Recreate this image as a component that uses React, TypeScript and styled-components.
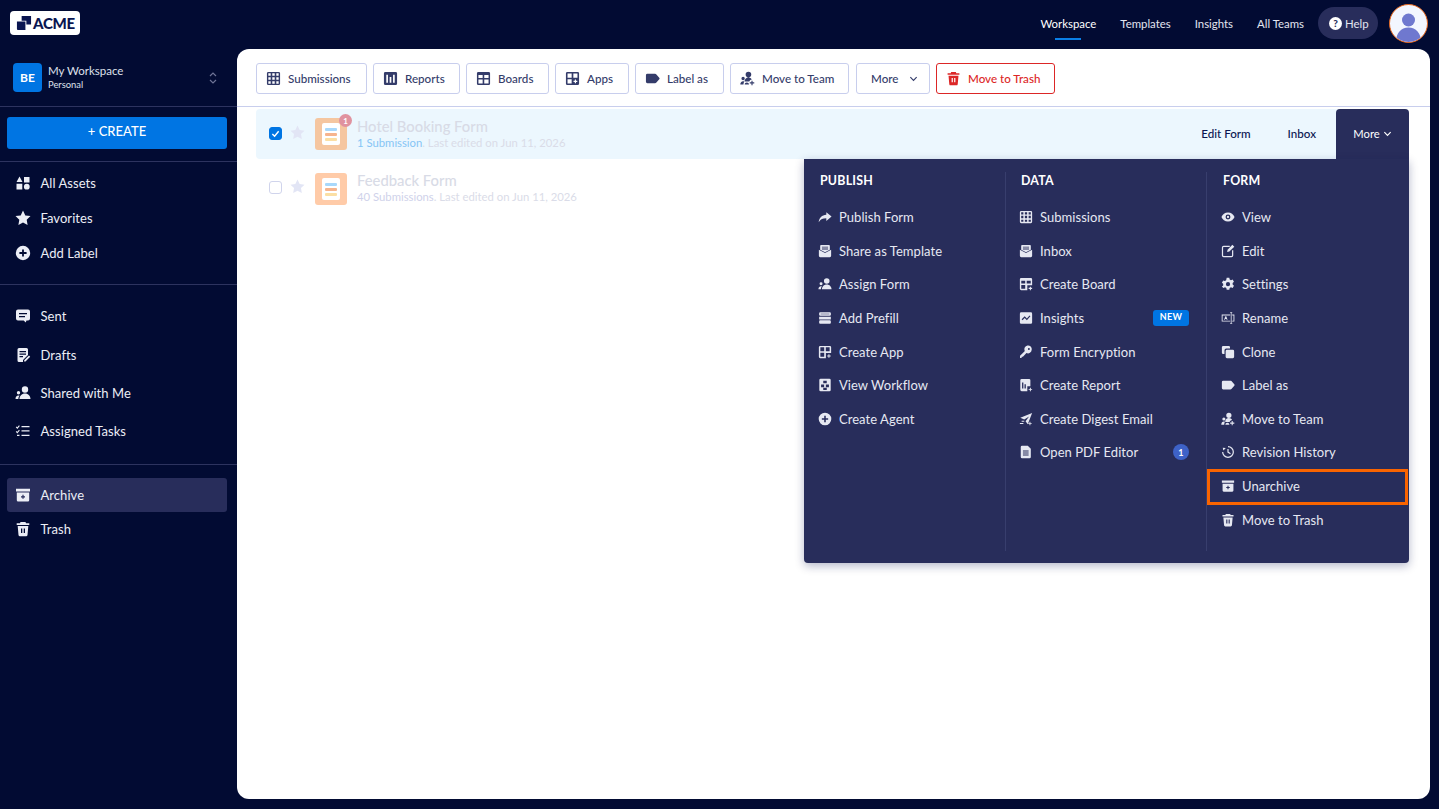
import React from 'react';
import styled, { createGlobalStyle } from 'styled-components';

const navy = '#020b33';
const panel = '#282d5b';
const FONT = `'Lato', 'Noto Sans', sans-serif`;

const GlobalStyle = createGlobalStyle`
    html, body { margin: 0; padding: 0; height: 100%; }
    body { background: ${navy}; font-family: ${FONT}; overflow: hidden; }
    #root { height: 100%; }
    * { box-sizing: border-box; }
`;

const r = (x: number, y: number, w: number, h: number) => `M${x} ${y}h${w}v${h}h${-w}z`;
const P = ({ d }: { d: string }) => <path fillRule="evenodd" clipRule="evenodd" d={d} />;
const plus = (x: number, y: number, s = 1.1, a = 2) =>
    `M${x - s / 2} ${y - a}h${s}v${a - s / 2}h${a - s / 2}v${s}h${s / 2 - a}v${a - s / 2}h${-s}v${s / 2 - a}h${s / 2 - a}v${-s}h${a - s / 2}z`;
const circle = (cx: number, cy: number, c: number) =>
    `M${cx - c} ${cy}a${c} ${c} 0 1 0 ${c * 2} 0a${c} ${c} 0 1 0 ${-c * 2} 0z`;

const icons: Record<string, React.ReactNode> = {
    assets: <P d={`M4.5 1.5L7.5 7H1.5z${r(9, 2, 5.5, 5.5)}${r(1.5, 8.8, 5.8, 5.7)}${circle(11.8, 11.7, 2.9)}`} />,
    star: <path d="M8 .6l2.3 4.8 5.200.7-3.800 3.600.9 5.200L8 12.400l-4.600 2.500.9-5.200L.5 6.100l5.200-.7z" />,
    plusCircle: <P d={`${circle(8, 8, 7.2)}${plus(8, 8, 1.8, 3.6)}`} />,
    sent: <P d={`M3 1.500h10a2 2 0 0 1 2 2v7a2 2 0 0 1-2 2h-1.500l-.8 2-2-2H3a2 2 0 0 1-2-2v-7a2 2 0 0 1 2-2z${r(4, 5, 8, 1.300)}${r(4, 8, 6, 1.300)}`} />,
    drafts: <P d={`M4 1h7.500A1.500 1.500 0 0 1 13 2.500V8l-5 5v2H4a1.500 1.500 0 0 1-1.500-1.500v-11A1.500 1.500 0 0 1 4 1z${r(4.500, 4, 6.500, 1.200)}${r(4.500, 6.500, 6.500, 1.200)}${r(4.500, 9, 3.500, 1.200)}M14 8.500l1.200 1.200-4.700 4.800H9.200v-1.300z`} />,
    people: <P d={`${circle(10, 4.500, 3.200)}M4.500 14c0-3 2.200-5.500 5.500-5.500s5.500 2.500 5.500 5.500z${circle(3.500, 7.800, 1.700)}M.5 14c0-2 1-3.500 3-3.500.500 0 .800.100 1 .200C3.700 11.600 3.300 12.700 3.300 14z`} />,
    tasks: <P d={`${r(6.500, 3, 8, 1.300)}${r(6.500, 7.300, 8, 1.300)}${r(6.500, 11.700, 8, 1.300)}M1.500 3.500l.8.8L4 2.300l.8.6-2.500 3-1.500-1.600zM1.500 8l.8.8L4 6.800l.8.6-2.500 3-1.500-1.600z${r(2, 11.800, 2.500, 1.200)}`} />,
    archive: <P d={`${r(1, 1.800, 14, 2.600)}M1.800 5.500h12.400v7.700a1.300 1.300 0 0 1-1.300 1.300H3.100a1.300 1.300 0 0 1-1.300-1.300z${plus(8, 9.800, 1.200, 2)}`} />,
    trash: <P d={`M5.500 1h5l.5 1.300h3.300v1.700H1.700V2.300H5zM2.700 5h10.600l-.8 9a1.500 1.500 0 0 1-1.500 1.300H5a1.500 1.500 0 0 1-1.500-1.300z${r(6, 7.500, 1.300, 4.500)}${r(8.700, 7.500, 1.300, 4.500)}`} />,
    grid: <P d={`M2.500 1h11A1.500 1.500 0 0 1 15 2.500v11a1.500 1.500 0 0 1-1.500 1.500h-11A1.500 1.500 0 0 1 1 13.500v-11A1.500 1.500 0 0 1 2.500 1z${r(2.500, 2.500, 2.500, 2.500)}${r(6.700, 2.500, 2.600, 2.500)}${r(11, 2.500, 2.500, 2.500)}${r(2.500, 6.700, 2.500, 2.600)}${r(6.700, 6.700, 2.600, 2.600)}${r(11, 6.700, 2.500, 2.600)}${r(2.500, 11, 2.500, 2.500)}${r(6.700, 11, 2.600, 2.500)}${r(11, 11, 2.500, 2.500)}`} />,
    reports: <P d={`M2.500 1h11A1.500 1.500 0 0 1 15 2.500v11a1.500 1.500 0 0 1-1.500 1.500h-11A1.500 1.500 0 0 1 1 13.500v-11A1.500 1.500 0 0 1 2.500 1z${r(3.500, 4, 1.800, 8.500)}${r(7.100, 6.500, 1.800, 6)}${r(10.700, 4, 1.800, 8.500)}`} />,
    boards: <P d={`M2.500 1h11A1.500 1.500 0 0 1 15 2.500v11a1.500 1.500 0 0 1-1.500 1.500h-11A1.500 1.500 0 0 1 1 13.500v-11A1.500 1.500 0 0 1 2.500 1z${r(2.600, 4.200, 4.500, 3.300)}${r(8.800, 4.200, 4.600, 3.300)}${r(2.600, 9.100, 4.500, 4.300)}${r(8.800, 9.100, 4.600, 4.300)}`} />,
    apps: <P d={`M2.500 1h11A1.500 1.500 0 0 1 15 2.500v11a1.500 1.500 0 0 1-1.500 1.500h-11A1.500 1.500 0 0 1 1 13.500v-11A1.500 1.500 0 0 1 2.500 1z${r(2.700, 2.700, 4.400, 4.400)}${r(8.900, 2.700, 4.400, 4.400)}${r(2.700, 8.900, 4.400, 4.400)}${plus(11.100, 11.100, 1.300, 2)}`} />,
    label: <path d="M2.500 3h8.300c.4 0 .8.200 1.100.5l3.300 3.600c.5.500.5 1.300 0 1.800l-3.300 3.600c-.3.300-.7.500-1.100.5H2.500A1.500 1.500 0 0 1 1 11.500v-7A1.500 1.500 0 0 1 2.500 3z" />,
    team: <P d={`${circle(9, 3.800, 3)}M4.800 11.300c0-2.800 1.700-4.500 4.200-4.500 1.700 0 3 .8 3.600 2.200-1.500.2-2.500 1.200-2.700 2.300z${circle(3.300, 8, 1.800)}M.3 14.500c0-2.300 1.200-3.700 3-3.700.5 0 .9.100 1.200.3-.5.9-.8 2.100-.8 3.400zM5 14.500c0-1.500 1-2.300 2.300-2.300s2.300.8 2.300 2.300z${plus(12.800, 12.700, 1.200, 2.400)}`} />,
    publish: <path d="M9.500 2.500L15.500 7.500 9.500 12.500V9.500C5.500 9.500 3 10.500.8 14 1.300 9 4.500 5.500 9.500 5.300z" />,
    template: <P d={`M3.500 1h9A1 1 0 0 1 13.500 2v4.600L8 9.500 2.500 6.600V2a1 1 0 0 1 1-1z${r(4.500, 3, 7, 1.100)}${r(4.500, 5.200, 7, 1.100)}M1 6.500l7 3.800 7-3.800v7a1.500 1.500 0 0 1-1.500 1.500h-11A1.500 1.500 0 0 1 1 13.500z`} />,
    prefill: <P d={`M2.500 1.500h11a1.200 1.200 0 0 1 1.200 1.200v1.600a1.200 1.200 0 0 1-1.200 1.200h-11a1.200 1.200 0 0 1-1.200-1.200V2.700A1.200 1.200 0 0 1 2.500 1.500z${r(1.300, 6.700, 13.400, 3)}M2.500 10.700h11a1.200 1.200 0 0 1 1.200 1.200v1.400a1.200 1.200 0 0 1-1.200 1.200h-11a1.200 1.200 0 0 1-1.200-1.200v-1.400a1.200 1.200 0 0 1 1.200-1.200z${r(3, 3, 10, .600)}`} />,
    createApp: <P d={`M2.500 1h11A1.500 1.500 0 0 1 15 2.500V9h-6v6H2.500A1.500 1.500 0 0 1 1 13.500v-11A1.500 1.500 0 0 1 2.500 1z${r(2.700, 2.700, 4.400, 4.400)}${r(8.900, 2.700, 4.400, 4.400)}${r(2.700, 8.900, 4.400, 4.400)}${plus(12.500, 12.500, 1.100, 2)}`} />,
    workflow: <P d={`M3 .8h10A1.500 1.500 0 0 1 14.500 2.300v11.400A1.500 1.500 0 0 1 13 15.200H3a1.500 1.500 0 0 1-1.500-1.500V2.300A1.500 1.500 0 0 1 3 .8z${r(6, 3, 4, 3)}${r(3.500, 7.500, 3.500, 3)}${r(9, 7.500, 3.500, 3)}${r(6, 11.200, 4, 2.500)}`} />,
    createBoard: <P d={`M2.500 1h11A1.500 1.500 0 0 1 15 2.500V9.500h-5.500V15h-7A1.500 1.500 0 0 1 1 13.500v-11A1.500 1.500 0 0 1 2.500 1z${r(2.600, 4.200, 4.500, 3.300)}${r(8.800, 4.200, 4.600, 3.300)}${r(2.600, 9.100, 4.500, 4.300)}${plus(13, 13, 1.200, 2)}`} />,
    insights: <P d={`M2.500 1.500h11A1.500 1.500 0 0 1 15 3v10a1.500 1.500 0 0 1-1.500 1.500h-11A1.500 1.500 0 0 1 1 13V3a1.500 1.500 0 0 1 1.500-1.500zM3 9.500l1 1 2.500-2.500 2.500 2.500 4-4.500-1-1-3 3.500L6.500 6 3 9.500z`} />,
    key: <P d={`M14.500 5.500a4.200 4.200 0 0 1-6 3.700L4.500 13.300H3v1.500H1.200v-2.500L6.700 6.800a4.200 4.200 0 1 1 7.800-1.300z${circle(11.300, 4.600, 1.100)}`} />,
    createReport: <P d={`M3 1h8.500A1.500 1.500 0 0 1 13 2.500V9.500H9.500V15H3a1.500 1.500 0 0 1-1.500-1.500v-11A1.500 1.500 0 0 1 3 1z${r(3.500, 5, 1.500, 7)}${r(6.300, 7, 1.500, 5)}${plus(13, 13, 1.100, 2)}`} />,
    digest: <P d={`M15 1L10 14 7.500 10.500 11.500 5 6 8.500 1.500 6.500zM3 10h3v1.200H3zM1 12.500h4v1.200H1z${plus(12.500, 13, 1, 2)}`} />,
    pdf: <P d={`M3.500 .8H10L13.500 4.300V13.700A1.500 1.500 0 0 1 12 15.200H3.500A1.500 1.500 0 0 1 2 13.700V2.300A1.500 1.500 0 0 1 3.500 .8z${r(4.500, 6.200, 6.500, 1.100)}${r(4.500, 8.500, 6.500, 1.100)}${r(4.500, 10.800, 6.500, 1.100)}`} />,
    eye: <P d={`M8 2.800c3.500 0 6.300 2.200 7.500 5.200-1.200 3-4 5.200-7.500 5.200S1.700 11 .5 8C1.700 5 4.500 2.800 8 2.800z${circle(8, 8, 2.800)}${circle(8, 8, 1.300)}`} />,
    edit: <P d={`M3 2h7v1.400H3A.6.6 0 0 0 2.400 4v9c0 .3.300.6.600.6h9c.3 0 .6-.3.6-.6V7H14v6a2 2 0 0 1-2 2H3a2 2 0 0 1-2-2V4a2 2 0 0 1 2-2zM13 .8L15.200 3 9.500 8.700 7 9.200l.5-2.500z`} />,
    gear: <P d={`M6.500 .8h3l.4 2 1.500.8 1.900-.7 1.500 2.600-1.500 1.300v1.800l1.500 1.300-1.500 2.600-1.900-.7-1.500.8-.4 2h-3l-.4-2-1.500-.8-1.900.7L1 10.900l1.500-1.300V7.800L1 6.500l1.500-2.600 1.900.7 1.500-.8z${circle(8, 8.200, 2.400)}`} />,
    rename: <P d={`M.8 4h9.700v1H1.800v6H10.500v1H.8zM12.800 4h2.500v8h-2.500v-1h1.500V5h-1.500zM10.500 1.500h2.300v.8h-.7v11.400h.7v.8h-2.300v-.8h.7V2.300h-.7zM3.500 10l1.500-4h1l1.500 4h-1l-.3-1H4.800L4.500 10z`} />,
    clone: <P d={`M2.500 1h6.300A1.500 1.500 0 0 1 10.300 2.500V4H6a2 2 0 0 0-2 2v4.300H2.500A1.500 1.500 0 0 1 1 8.800V2.500A1.500 1.500 0 0 1 2.500 1zM6.800 5.500h6.700A1.500 1.500 0 0 1 15 7v6.500a1.500 1.500 0 0 1-1.500 1.500H6.800a1.500 1.500 0 0 1-1.500-1.500V7a1.500 1.500 0 0 1 1.500-1.500z`} />,
    history: <P d={`M8 1.200A6.800 6.800 0 1 1 1.200 8h1.400A5.400 5.400 0 1 0 8 2.600zM7.300 4.500h1.400v3.300l2.500 1.500-.7 1.200-3.200-1.900zM2 3l3.500.3L2.700 6.300z`} />,
};

const Icon = ({ name, size = 16 }: { name: string; size?: number }) => (
    <svg width={size} height={size} viewBox="0 0 16 16" fill="currentColor" aria-hidden>
        {icons[name]}
    </svg>
);

const Page = styled.div`
    display: flex;
    flex-direction: column;
    height: 809px;
    width: 1439px;
    background: ${navy};
`;

const Topbar = styled.header`
    display: flex;
    align-items: center;
    justify-content: space-between;
    height: 49px;
    flex: none;
    padding: 0 11px 3px 10px;
`;

const Logo = styled.div`
    display: flex;
    align-items: center;
    gap: 1px;
    width: 70px;
    height: 24px;
    padding-left: 6px;
    border-radius: 4px;
    background: #fff;
    color: #0a1551;
    font-size: 15px;
    font-weight: 900;
    letter-spacing: -0.3px;
`;

const TopNav = styled.nav`
    display: flex;
    align-items: center;
`;

const TopLink = styled.a<{ $active?: boolean }>`
    position: relative;
    margin-right: 24px;
    font-size: 11.4px;
    color: ${({ $active }) => ($active ? '#fff' : '#e3e5f0')};

    &::after {
        content: '';
        display: ${({ $active }) => ($active ? 'block' : 'none')};
        position: absolute;
        left: 15px;
        right: 15px;
        bottom: -10px;
        height: 1.5px;
        background: #0a7fe8;
    }
`;

const HelpPill = styled.div`
    display: flex;
    align-items: center;
    gap: 3px;
    width: 60px;
    height: 32px;
    margin-left: -10px;
    padding-left: 11px;
    border-radius: 16px;
    background: ${panel};
    color: #e3e5f0;
    font-size: 11.4px;
`;

const HelpDot = styled.span`
    display: flex;
    align-items: center;
    justify-content: center;
    width: 13px;
    height: 13px;
    border-radius: 50%;
    background: #fff;
    color: ${panel};
    font-size: 10px;
    font-weight: 900;
`;

const Avatar = styled.div`
    width: 39px;
    height: 39px;
    margin-left: 11px;
    border-radius: 50%;
    border: 1px solid #e8661c;
    background: #f3f6ff;
    overflow: hidden;
`;

const Body = styled.div`
    display: flex;
    flex: 1;
    min-height: 0;
`;

const Sidebar = styled.aside`
    width: 237px;
    flex: none;
    color: #eceef6;
`;

const WorkspaceRow = styled.div`
    display: flex;
    align-items: center;
    height: 58px;
    padding: 0 19px 0 13px;
    border-bottom: 1px solid #2d335f;
`;

const WorkspaceTile = styled.div`
    display: flex;
    align-items: center;
    justify-content: center;
    width: 29px;
    height: 29px;
    margin-right: 6px;
    border-radius: 4px;
    background: #0075e3;
    color: #fff;
    font-size: 12px;
    font-weight: 700;
`;

const WorkspaceName = styled.div`
    flex: 1;
    font-size: 11.5px;
    line-height: 14px;
    color: #dfe1ec;
`;

const WorkspaceSub = styled.div`
    font-size: 9.4px;
    line-height: 13px;
`;

const Updown = styled.svg`
    width: 10px;
    height: 14px;
    fill: none;
    stroke: #6e7396;
    stroke-width: 1.2;
`;

const CreateBlock = styled.div`
    padding: 10px 10px 12px 7px;
    border-bottom: 1px solid #2d335f;
`;

const CreateButton = styled.button`
    display: block;
    width: 220px;
    height: 32px;
    padding: 0 0 5px;
    border: 0;
    border-radius: 3px;
    background: #0075e3;
    color: #fff;
    font-family: ${FONT};
    font-size: 13px;
    font-weight: 500;
`;

const NavGroup = styled.div<{ $pad: string; $line?: boolean }>`
    padding: ${({ $pad }) => $pad};
    border-bottom: ${({ $line }) => ($line ? '1px solid #2d335f' : '0')};
`;

const NavItem = styled.div<{ $h: number; $active?: boolean }>`
    display: flex;
    align-items: center;
    gap: 9.5px;
    width: 220px;
    height: ${({ $h }) => $h}px;
    padding-left: 8px;
    border-radius: 3px;
    font-size: 13px;
    letter-spacing: 0.05px;
    background: ${({ $active }) => ($active ? panel : 'transparent')};
`;

const Main = styled.main`
    position: relative;
    flex: 1;
    margin: 0 9px 10px 0;
    border-radius: 12px;
    background: #fff;
`;

const Toolbar = styled.div`
    display: flex;
    align-items: center;
    gap: 6px;
    height: 58px;
    padding: 2px 19px 0;
    border-bottom: 1px solid #c8ceed;
`;

const ToolButton = styled.button<{ $danger?: boolean; $w: number; $gap?: number }>`
    display: flex;
    align-items: center;
    gap: 7px;
    flex: none;
    width: ${({ $w }) => $w}px;
    height: 31px;
    margin-left: ${({ $gap }) => $gap ?? 0}px;
    padding: 0 0 0 9px;
    border: 1px solid ${({ $danger }) => ($danger ? '#dc2626' : '#c8ceed')};
    border-radius: 3px;
    background: #fff;
    color: ${({ $danger }) => ($danger ? '#dc2626' : '#343c6a')};
    font-family: ${FONT};
    font-size: 11.6px;
    font-weight: 500;
`;

const List = styled.div`
    padding: 2px 21px 0 19px;
`;

const Row = styled.div<{ $selected?: boolean }>`
    position: relative;
    display: flex;
    align-items: center;
    height: 50px;
    margin-bottom: 4px;
    padding-left: 13px;
    border-radius: 4px;
    background: ${({ $selected }) => ($selected ? '#ecf7fe' : 'transparent')};
`;

const Check = styled.span<{ $on?: boolean }>`
    display: flex;
    align-items: center;
    justify-content: center;
    width: 13px;
    height: 13px;
    margin: 0 8px 2px 0;
    border-radius: 3px;
    border: 1px solid ${({ $on }) => ($on ? '#0075e3' : '#d0d4ec')};
    background: ${({ $on }) => ($on ? '#0075e3' : '#fff')};
`;

const RowStar = styled.span`
    display: flex;
    margin: 0 10px 3px 0;
    color: #e2e5f5;
`;

const FormTile = styled.div<{ $tone: string; $drop?: boolean }>`
    position: relative;
    display: flex;
    align-items: center;
    justify-content: center;
    width: 32px;
    height: 32px;
    margin: ${({ $drop }) => ($drop ? '2px' : '0')} 10px 0 0;
    border-radius: 3px;
    background: ${({ $tone }) => $tone};
`;

const FormPaper = styled.div`
    display: flex;
    flex-direction: column;
    justify-content: center;
    gap: 2px;
    width: 18px;
    height: 22px;
    padding: 0 3px;
    border-radius: 2px;
    background: #fff;
`;

const Bar = styled.span<{ $c: string }>`
    height: 3px;
    border-radius: 1px;
    background: ${({ $c }) => $c};
`;

const CountBadge = styled.span`
    position: absolute;
    top: -4px;
    right: -5px;
    display: flex;
    align-items: center;
    justify-content: center;
    width: 13px;
    height: 13px;
    border-radius: 50%;
    background: #e0929f;
    color: #fff;
    font-size: 8px;
    font-weight: 700;
`;

const RowText = styled.div`
    flex: 1;
    margin-bottom: 3px;
`;

const RowTitle = styled.div`
    font-size: 14.8px;
    line-height: 18px;
    font-weight: 500;
    color: #d8dbe6;
`;

const RowMeta = styled.div`
    margin-top: 1px;
    font-size: 11.3px;
    line-height: 13px;
    color: #dadce8;
`;

const MetaCount = styled.span<{ $c: string }>`
    color: ${({ $c }) => $c};
`;

const RowAction = styled.span<{ $end?: boolean }>`
    margin: 0 ${({ $end }) => ($end ? 20 : 37)}px 2px 0;
    font-size: 11.6px;
    font-weight: 500;
    color: #0a1551;
`;

const MoreTab = styled.div`
    display: flex;
    align-items: center;
    justify-content: center;
    gap: 3px;
    width: 73px;
    height: 50px;
    padding-bottom: 2px;
    border-radius: 4px 4px 0 0;
    background: ${panel};
    color: #fff;
    font-size: 11.2px;
`;

const Menu = styled.div`
    position: absolute;
    top: 50px;
    right: 0;
    z-index: 2;
    display: grid;
    grid-template-columns: 201px 201px 203px;
    width: 605px;
    height: 404px;
    padding: 13px 0 12px;
    border-radius: 0 0 4px 4px;
    background: ${panel};
    box-shadow: 0 3px 10px rgba(10, 21, 81, 0.3);
`;

const MenuCol = styled.div<{ $first?: boolean; $nudge?: number }>`
    border-left: ${({ $first }) => ($first ? '0' : '1px solid #383e6d')};

    & > * {
        margin-left: ${({ $nudge }) => $nudge ?? 0}px;
    }
`;

const MenuTitle = styled.div`
    height: 16px;
    margin-top: 1px;
    margin-bottom: 11.4px;
    padding-left: 16px;
    font-size: 12.4px;
    line-height: 16px;
    font-weight: 700;
    letter-spacing: 0.2px;
    color: #fff;
`;

const MenuItem = styled.div<{ $focus?: boolean }>`
    position: relative;
    display: flex;
    align-items: center;
    gap: 7px;
    height: 33.6px;
    padding-left: 14px;
    font-size: 13px;
    letter-spacing: 0.05px;
    color: #e6e8f2;

    ${({ $focus }) =>
        $focus &&
        `&::after {
            content: '';
            position: absolute;
            inset: 0 1px -2px 0;
            border: 3.5px solid #fa6400;
        }`}
`;

const MenuLabel = styled.span`
    flex: 1;
`;

const NewTag = styled.span`
    display: flex;
    align-items: center;
    justify-content: center;
    width: 36px;
    height: 16px;
    margin-right: 17px;
    padding-bottom: 2px;
    border-radius: 3px;
    background: #0075e3;
    color: #fff;
    font-size: 9px;
    font-weight: 700;
    letter-spacing: 0.3px;
`;

const PdfCount = styled.span`
    display: flex;
    align-items: center;
    justify-content: center;
    width: 16px;
    height: 16px;
    margin-right: 17px;
    border-radius: 50%;
    background: #3e62c8;
    color: #fff;
    font-size: 9px;
    font-weight: 700;
`;

type MenuEntry = { icon: string; label: string; tag?: 'new' | 'count'; focus?: boolean };

const menus: { title: string; nudge?: number; items: MenuEntry[] }[] = [
    {
        title: 'PUBLISH',
        items: [
            { icon: 'publish', label: 'Publish Form' },
            { icon: 'template', label: 'Share as Template' },
            { icon: 'people', label: 'Assign Form' },
            { icon: 'prefill', label: 'Add Prefill' },
            { icon: 'createApp', label: 'Create App' },
            { icon: 'workflow', label: 'View Workflow' },
            { icon: 'plusCircle', label: 'Create Agent' },
        ],
    },
    {
        title: 'DATA',
        nudge: -1,
        items: [
            { icon: 'grid', label: 'Submissions' },
            { icon: 'template', label: 'Inbox' },
            { icon: 'createBoard', label: 'Create Board' },
            { icon: 'insights', label: 'Insights', tag: 'new' },
            { icon: 'key', label: 'Form Encryption' },
            { icon: 'createReport', label: 'Create Report' },
            { icon: 'digest', label: 'Create Digest Email' },
            { icon: 'pdf', label: 'Open PDF Editor', tag: 'count' },
        ],
    },
    {
        title: 'FORM',
        items: [
            { icon: 'eye', label: 'View' },
            { icon: 'edit', label: 'Edit' },
            { icon: 'gear', label: 'Settings' },
            { icon: 'rename', label: 'Rename' },
            { icon: 'clone', label: 'Clone' },
            { icon: 'label', label: 'Label as' },
            { icon: 'team', label: 'Move to Team' },
            { icon: 'history', label: 'Revision History' },
            { icon: 'archive', label: 'Unarchive', focus: true },
            { icon: 'trash', label: 'Move to Trash' },
        ],
    },
];

const tools = [
    { icon: 'grid', label: 'Submissions', w: 111 },
    { icon: 'reports', label: 'Reports', w: 87 },
    { icon: 'boards', label: 'Boards', w: 83 },
    { icon: 'apps', label: 'Apps', w: 74 },
    { icon: 'label', label: 'Label as', w: 89 },
    { icon: 'team', label: 'Move to Team', w: 119 },
];

const Chevron = ({ size = 9 }: { size?: number }) => (
    <svg width={size} height={size} viewBox="0 0 10 10" fill="none" stroke="currentColor" strokeWidth="1.3">
        <path d="M1.500 3.500L5 7l3.500-3.500" />
    </svg>
);

const MoreLabel = styled.span`
    margin: 0 3.500px 0 5px;
`;

const FormIcon = ({ tone, badge, drop }: { tone: string; badge?: boolean; drop?: boolean }) => (
    <FormTile $tone={tone} $drop={drop}>
        <FormPaper>
            <Bar $c="#a8d8fb" />
            <Bar $c="#f6b48e" />
            <Bar $c="#fbdfa4" />
        </FormPaper>
        {badge && <CountBadge>1</CountBadge>}
    </FormTile>
);

const App: React.FC = () => (
    <Page>
        <GlobalStyle />
        <Topbar>
            <Logo>
                <svg width="16" height="16" viewBox="0 0 17 17" fill="#0a1551">
                    <path d="M6 1h10v9H11V6H6z" />
                    <path d="M1 7h9v9H2a1 1 0 0 1-1-1z" />
                </svg>
                ACME
            </Logo>
            <TopNav>
                <TopLink $active>Workspace</TopLink>
                <TopLink>Templates</TopLink>
                <TopLink>Insights</TopLink>
                <TopLink>All Teams</TopLink>
                <HelpPill>
                    <HelpDot>?</HelpDot>
                    Help
                </HelpPill>
                <Avatar>
                    <svg width="37" height="37" viewBox="0 0 37 37" fill="#6f78cf">
                        <circle cx="18.500" cy="15" r="6.500" />
                        <path d="M6 37c0-9 5-14.500 12.500-14.500S31 28 31 37z" />
                    </svg>
                </Avatar>
            </TopNav>
        </Topbar>
        <Body>
            <Sidebar>
                <WorkspaceRow>
                    <WorkspaceTile>BE</WorkspaceTile>
                    <WorkspaceName>
                        My Workspace
                        <WorkspaceSub>Personal</WorkspaceSub>
                    </WorkspaceName>
                    <Updown viewBox="0 0 10 14">
                        <path d="M2 5l3-3 3 3M2 9l3 3 3-3" />
                    </Updown>
                </WorkspaceRow>
                <CreateBlock>
                    <CreateButton>+ CREATE</CreateButton>
                </CreateBlock>
                <NavGroup $pad="3px 0 14px 7px" $line>
                    <NavItem $h={35}><Icon name="assets" />All Assets</NavItem>
                    <NavItem $h={35}><Icon name="star" />Favorites</NavItem>
                    <NavItem $h={35}><Icon name="plusCircle" />Add Label</NavItem>
                </NavGroup>
                <NavGroup $pad="12px 0 13px 7px" $line>
                    <NavItem $h={38.400}><Icon name="sent" />Sent</NavItem>
                    <NavItem $h={38.400}><Icon name="drafts" />Drafts</NavItem>
                    <NavItem $h={38.400}><Icon name="people" />Shared with Me</NavItem>
                    <NavItem $h={38.400}><Icon name="tasks" />Assigned Tasks</NavItem>
                </NavGroup>
                <NavGroup $pad="13px 0 0 7px">
                    <NavItem $h={34} $active><Icon name="archive" />Archive</NavItem>
                    <NavItem $h={35}><Icon name="trash" />Trash</NavItem>
                </NavGroup>
            </Sidebar>
            <Main>
                <Toolbar>
                    {tools.map((t) => (
                        <ToolButton key={t.label} $w={t.w}>
                            <Icon name={t.icon} size={15} />
                            {t.label}
                        </ToolButton>
                    ))}
                    <ToolButton $w={74} $gap={1}>
                        <MoreLabel>More</MoreLabel>
                        <Chevron />
                    </ToolButton>
                    <ToolButton $w={119} $danger>
                        <Icon name="trash" size={15} />
                        Move to Trash
                    </ToolButton>
                </Toolbar>
                <List>
                    <Row $selected>
                        <Check $on>
                            <svg width="9" height="9" viewBox="0 0 10 10" fill="none" stroke="#fff" strokeWidth="1.600">
                                <path d="M1.500 5.500L4 8l4.500-5.500" />
                            </svg>
                        </Check>
                        <RowStar><Icon name="star" size={15} /></RowStar>
                        <FormIcon tone="#f5c6a0" badge />
                        <RowText>
                            <RowTitle>Hotel Booking Form</RowTitle>
                            <RowMeta>
                                <MetaCount $c="#86c5f5">1 Submission</MetaCount>. Last edited on Jun 11, 2026
                            </RowMeta>
                        </RowText>
                        <RowAction>Edit Form</RowAction>
                        <RowAction $end>Inbox</RowAction>
                        <MoreTab>More <Chevron /></MoreTab>
                        <Menu>
                            {menus.map((m, i) => (
                                <MenuCol key={m.title} $first={i === 0} $nudge={m.nudge}>
                                    <MenuTitle>{m.title}</MenuTitle>
                                    {m.items.map((it) => (
                                        <MenuItem key={it.label} $focus={it.focus}>
                                            <Icon name={it.icon} size={14} />
                                            <MenuLabel>{it.label}</MenuLabel>
                                            {it.tag === 'new' && <NewTag>NEW</NewTag>}
                                            {it.tag === 'count' && <PdfCount>1</PdfCount>}
                                        </MenuItem>
                                    ))}
                                </MenuCol>
                            ))}
                        </Menu>
                    </Row>
                    <Row>
                        <Check />
                        <RowStar><Icon name="star" size={15} /></RowStar>
                        <FormIcon tone="#ffcba8" drop />
                        <RowText>
                            <RowTitle>Feedback Form</RowTitle>
                            <RowMeta>
                                <MetaCount $c="#cfd2ea">40 Submissions</MetaCount>. Last edited on Jun 11, 2026
                            </RowMeta>
                        </RowText>
                    </Row>
                </List>
            </Main>
        </Body>
    </Page>
);

export default App;
